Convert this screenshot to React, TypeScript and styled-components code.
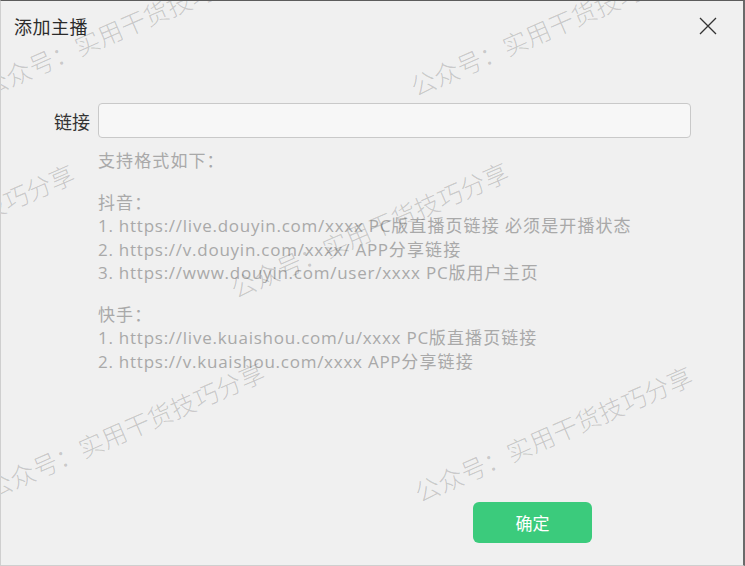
import styled, { createGlobalStyle } from 'styled-components';

const GlobalStyle = createGlobalStyle`
  html, body {
    margin: 0;
    padding: 0;
    background: #f0f0f0;
  }
  * {
    box-sizing: border-box;
  }
`;

const FONT = `"Noto Sans CJK SC", "Noto Sans", sans-serif`;
const TEXT_FONT = `"Open Sans", "Noto Sans CJK SC", sans-serif`;

const douyinLinks = [
  '1. https://live.douyin.com/xxxx PC版直播页链接 必须是开播状态',
  '2. https://v.douyin.com/xxxx/ APP分享链接',
  '3. https://www.douyin.com/user/xxxx PC版用户主页',
];

const kuaishouLinks = [
  '1. https://live.kuaishou.com/u/xxxx PC版直播页链接',
  '2. https://v.kuaishou.com/xxxx APP分享链接',
];

// centres of the tiled watermark text
const marks = [
  { x: 120, y: 26 },
  { x: 548, y: 26 },
  { x: -66, y: 230 },
  { x: 368, y: 228 },
  { x: 124, y: 428 },
  { x: 552, y: 432 },
];

// chinese runs get their own span so they can be spaced apart from the latin text
const splitRuns = (text: string) =>
  text.split(/([\u4e00-\u9fff\uff1a]+)/).map((part, i) =>
    /[\u4e00-\u9fff]/.test(part) ? <Cjk key={i}>{part}</Cjk> : part
  );

export default function App() {
  return (
    <>
      <GlobalStyle />
      <Window>
        <TitleBar>
          <Title>添加主播</Title>
          <CloseButton aria-label="close">
            <svg width="18" height="18" viewBox="0 0 18 18">
              <path d="M1 1 L17 17 M17 1 L1 17" stroke="#333" strokeWidth="1.3" fill="none" />
            </svg>
          </CloseButton>
        </TitleBar>

        <FormRow>
          <Label htmlFor="link">链接</Label>
          <Input id="link" type="text" />
        </FormRow>

        <Help>
          <HelpLine>{splitRuns('支持格式如下：')}</HelpLine>
          <Group>
            <HelpLine>{splitRuns('抖音：')}</HelpLine>
            {douyinLinks.map((l) => (
              <HelpLine key={l}>{splitRuns(l)}</HelpLine>
            ))}
          </Group>
          <Group>
            <HelpLine>{splitRuns('快手：')}</HelpLine>
            {kuaishouLinks.map((l) => (
              <HelpLine key={l}>{splitRuns(l)}</HelpLine>
            ))}
          </Group>
        </Help>

        <Footer>
          <ConfirmButton>确定</ConfirmButton>
        </Footer>

        <Watermarks>
          {marks.map((m, i) => (
            <Mark key={i} style={{ left: m.x, top: m.y }}>
              公众号：实用干货技巧分享
            </Mark>
          ))}
        </Watermarks>
      </Window>
    </>
  );
}

const Window = styled.div`
  position: relative;
  display: flex;
  flex-direction: column;
  width: 745px;
  height: 566px;
  overflow: hidden;
  background: #f0f0f0;
  border: 1px solid #cfcfcf;
  border-top-color: #5c5c5c;
  border-right: 2px solid #6a6a6a;
  font-family: ${FONT};
`;

const TitleBar = styled.div`
  display: flex;
  align-items: center;
  justify-content: space-between;
  height: 50px;
  padding: 0 26px 0 13px;
`;

const Title = styled.div`
  font-size: 18px;
  color: #2b2b2b;
  letter-spacing: 0.5px;
`;

const CloseButton = styled.button`
  display: flex;
  padding: 0;
  border: none;
  background: transparent;
  cursor: pointer;
`;

const FormRow = styled.div`
  display: flex;
  align-items: center;
  margin-top: 52px;
`;

const Label = styled.label`
  width: 97px;
  padding-right: 8px;
  text-align: right;
  font-size: 18px;
  color: #333;
`;

const Input = styled.input`
  width: 593px;
  height: 35px;
  background: #f7f7f7;
  border: 1px solid #c9c9c9;
  border-radius: 4px;
  outline: none;
  font-family: ${FONT};
  font-size: 16px;
`;

const Help = styled.div`
  display: flex;
  flex-direction: column;
  gap: 18px;
  margin-top: 11px;
  padding-left: 97px;
  color: #a9a9a9;
  font-family: ${TEXT_FONT};
  font-size: 17px;
`;

const Group = styled.div`
  display: flex;
  flex-direction: column;
`;

const HelpLine = styled.div`
  line-height: 23.5px;
  white-space: nowrap;
  letter-spacing: 0.75px;
`;

const Cjk = styled.span`
  font-family: ${FONT};
  line-height: 1;
  letter-spacing: 1.1px;
`;

const Footer = styled.div`
  display: flex;
  justify-content: flex-end;
  margin-top: auto;
  padding: 0 151px 22px 0;
`;

const ConfirmButton = styled.button`
  width: 119px;
  height: 41px;
  border: none;
  border-radius: 6px;
  background: #3bcb7c;
  color: #fff;
  font-family: ${FONT};
  font-size: 17px;
  cursor: pointer;
`;

const Watermarks = styled.div`
  position: absolute;
  inset: 0;
  pointer-events: none;
`;

const Mark = styled.span`
  position: absolute;
  transform: translate(-50%, -50%) rotate(-23.5deg);
  white-space: nowrap;
  font-size: 25px;
  font-weight: 300;
  color: rgba(0, 0, 0, 0.18);
  font-family: ${FONT};
`;
